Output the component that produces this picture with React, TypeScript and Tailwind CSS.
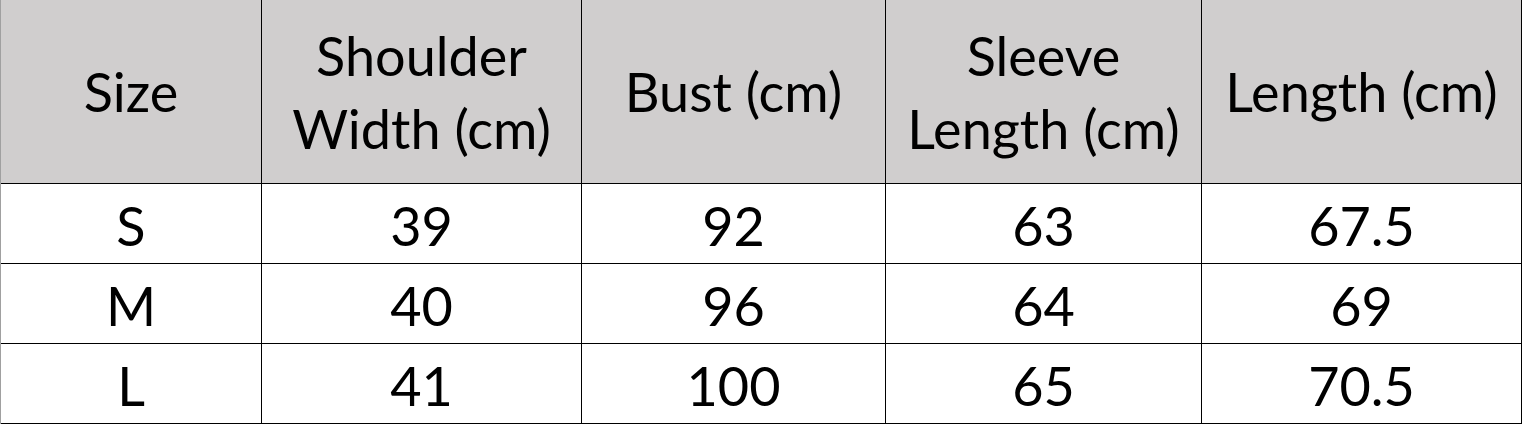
import React from 'react';

const header = ['Size', 'Shoulder\nWidth (cm)', 'Bust (cm)', 'Sleeve\nLength (cm)', 'Length (cm)'];

const rows = [
  ['S', '39', '92', '63', '67.5'],
  ['M', '40', '96', '64', '69'],
  ['L', '41', '100', '65', '70.5'],
];

const App: React.FC = () => {
  return (
    <div className="w-[1522px] h-[425px] bg-white">
      <div
        className="grid grid-cols-[261px_320px_304px_316px_320px] grid-rows-[184px_80px_80px_80px] border-l border-l-[#a0a0a0] text-black text-[54px] leading-[70px]"
        style={{ fontFamily: 'Lato, "Open Sans", sans-serif' }}
      >
        {header.map((h, i) => (
          <div
            key={i}
            className="flex items-center justify-center text-center whitespace-pre-line leading-[73px] bg-[#d0cece] border-r border-b border-black"
          >
            {h}
          </div>
        ))}
        {rows.map((row, r) =>
          row.map((cell, c) => (
            <div
              key={`${r}-${c}`}
              className="flex items-center justify-center pt-1 border-r border-b border-black"
            >
              {cell}
            </div>
          ))
        )}
      </div>
    </div>
  );
};

export default App;
